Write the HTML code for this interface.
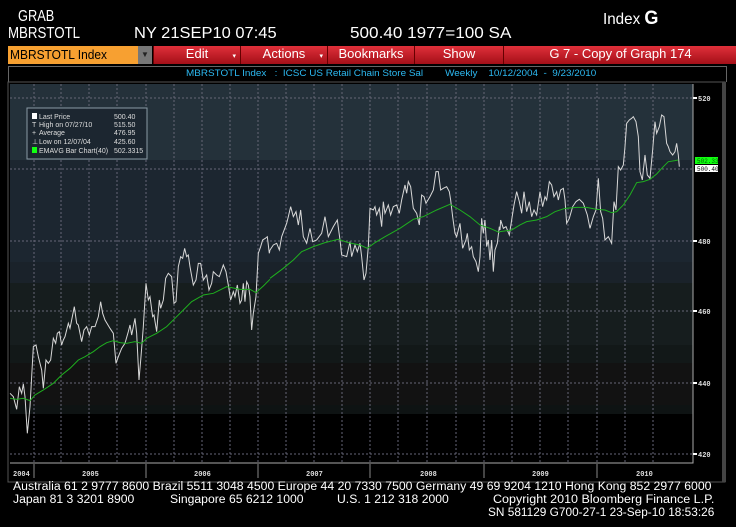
<!DOCTYPE html><html><head><meta charset="utf-8"><style>
body{margin:0;width:736px;height:527px;background:#000;overflow:hidden;position:relative;font-family:"Liberation Sans",sans-serif}
.t{position:absolute;color:#fff;white-space:nowrap;transform-origin:left}
.btn{position:absolute;top:46px;height:18px;background:linear-gradient(#e0303a,#a40f18);color:#fff;font-size:13px;text-align:center;line-height:16px;border-left:1px solid #600}
.f{position:absolute;color:#fff;font-size:11.5px;white-space:pre;transform-origin:left}
</style></head><body>
<div class="t" style="left:18px;top:8px;font-size:16px;transform:scaleX(.8)">GRAB</div>
<div class="t" style="left:603px;top:8px;font-size:16px;transform:scaleX(.95)">Index <b style="font-size:19px">G</b></div>
<div class="t" style="left:8px;top:25px;font-size:16px;transform:scaleX(.83)">MBRSTOTL</div>
<div class="t" style="left:134px;top:25px;font-size:16px;transform:scaleX(1.03)">NY 21SEP10 07:45</div>
<div class="t" style="left:350px;top:25px;font-size:16px;transform:scaleX(1.07)">500.40 1977=100 SA</div>
<div style="position:absolute;left:8px;top:46px;width:130px;height:18px;background:#f7a031;color:#000;font-size:13px;line-height:18px;padding-left:2px;box-sizing:border-box"><span style="display:inline-block;transform:scaleX(.92);transform-origin:left">MBRSTOTL Index</span></div>
<div style="position:absolute;left:138px;top:46px;width:14px;height:18px;background:#777;color:#222;font-size:8px;text-align:center;line-height:18px">▼</div>
<div class="btn" style="left:153px;width:86px">Edit <span style="font-size:7px;position:absolute;right:4px;top:3px">▾</span></div>
<div class="btn" style="left:240px;width:86px">Actions <span style="font-size:7px;position:absolute;right:4px;top:3px">▾</span></div>
<div class="btn" style="left:327px;width:86px">Bookmarks</div>
<div class="btn" style="left:414px;width:88px">Show</div>
<div class="btn" style="left:503px;width:233px">G 7 - Copy of Graph 174</div>
<div style="position:absolute;left:8px;top:66px;width:717px;height:15px;border:1px solid #666;border-bottom:none"></div>
<div class="t" style="left:186px;top:68px;font-size:9px;color:#2cb8f0;transform:scaleX(1.1)">MBRSTOTL Index &nbsp;&nbsp;: &nbsp;ICSC US Retail Chain Store Sal &nbsp;&nbsp;&nbsp;&nbsp;&nbsp;&nbsp;&nbsp;Weekly &nbsp;&nbsp;&nbsp;10/12/2004 &nbsp;- &nbsp;9/23/2010</div>
<svg style="position:absolute;left:0;top:0" width="736" height="527">
<rect x="8" y="82" width="717" height="400" fill="#000" stroke="#555"/>
<rect x="722" y="82" width="4" height="400" fill="#444"/>
<rect x="10" y="84" width="683" height="76" fill="#24313a"/>
<rect x="10" y="160" width="683" height="102" fill="#1c2630"/>
<rect x="10" y="262" width="683" height="21" fill="#1a222a"/>
<rect x="10" y="283" width="683" height="62" fill="#161d1e"/>
<rect x="10" y="345" width="683" height="18" fill="#121818"/>
<rect x="10" y="363" width="683" height="42" fill="#121212"/>
<rect x="10" y="405" width="683" height="9" fill="#0e1313"/>
<g stroke="#667" stroke-width="1" stroke-dasharray="2,2">
<path d="M10 98H693M10 169H693M10 241H693M10 311H693M10 383H693M10 454H693"/>
<path d="M34 84V463M61 84V463M89 84V463M117 84V463M146 84V463M174 84V463M202 84V463M230 84V463M258 84V463M286 84V463M314 84V463M342 84V463M370 84V463M398 84V463M427 84V463M456 84V463M484 84V463M512 84V463M540 84V463M568 84V463M597 84V463M625 84V463M653 84V463"/>
</g>
<path d="M10 463H693V84" stroke="#aaa" fill="none"/>
<g stroke="#888"><path d="M34 464V478M146 464V478M258 464V478M370 464V478M484 464V478M597 464V478"/></g>
<g fill="#ddd" font-size="7" font-family="Liberation Mono,monospace" font-weight="bold">
<text x="13" y="476">2004</text><text x="82" y="476">2005</text><text x="194" y="476">2006</text><text x="306" y="476">2007</text><text x="420" y="476">2008</text><text x="532" y="476">2009</text><text x="636" y="476">2010</text>
<text x="698" y="101">520</text><text x="698" y="244">480</text><text x="698" y="314">460</text><text x="698" y="386">440</text><text x="698" y="457">420</text>
</g>
<g fill="#fff"><rect x="693" y="97" width="4" height="2"/><rect x="693" y="240" width="4" height="2"/><rect x="693" y="310" width="4" height="2"/><rect x="693" y="382" width="4" height="2"/><rect x="693" y="453" width="4" height="2"/></g>
<rect x="695" y="157" width="23" height="7" fill="#1f1"/><rect x="695" y="165" width="23" height="7" fill="#fff"/>
<text x="697" y="163" font-size="6" fill="#060" font-family="Liberation Mono">502.33</text>
<text x="697" y="171" font-size="6" fill="#000" font-family="Liberation Mono">500.40</text>
<g fill="none" stroke-width="1">
<g transform="translate(10,200) scale(.3333)">
<polyline vector-effect="non-scaling-stroke" stroke="#d8d8d8" points="0,580 10,590 20,628 28,560 35,580 40,552 45,590 52,700 60,620 65,530 70,440 78,435 85,470 95,510 100,565 108,480 115,490 122,480 130,415 137,430 142,400 148,395 155,435 160,420 165,410 175,370 180,385 185,360 193,320 200,370 205,375 215,425 222,390 230,380 238,405 245,380 255,380 265,350 272,305 278,340 285,360 300,385 310,400 318,490 325,470 335,445 345,430 355,395 360,375 365,405 375,355 380,400 387,540 393,470 400,380 408,250 415,300 420,290 428,350 432,345 440,395 448,300 452,325 460,300 467,235 475,220 485,230 492,310 498,305 505,200 512,170 518,175 524,145 530,170 535,165 540,200 550,255 558,240 565,190 572,190 580,240 590,225 597,270 605,250 610,215 620,225 628,230 640,195 648,215 655,255 662,300 670,275 675,290 682,255 690,310 695,300 700,250 705,305 710,245 715,255 720,290 725,390 730,340 738,290 745,160 752,140 758,120 766,115 772,110 778,160 780,150"/>
<polyline vector-effect="non-scaling-stroke" stroke="#1fb01f" points="0,595 20,598 40,595 60,602 75,585 100,570 130,550 155,525 180,505 205,480 225,470 250,455 270,440 290,428 310,422 330,428 350,430 375,425 395,430 410,415 440,400 470,380 495,355 520,330 545,305 580,285 610,280 650,260 690,268 720,268 738,278 760,258 780,238"/>
</g>
<g transform="translate(260,100) scale(.3333)">
<polyline vector-effect="non-scaling-stroke" stroke="#d8d8d8" points="30,450 40,435 50,430 58,450 65,410 80,370 85,350 92,320 100,350 108,335 115,375 122,330 130,410 140,430 150,385 158,425 170,420 185,400 195,350 205,410 220,380 232,360 240,420 245,465 260,470 270,425 275,470 285,435 292,455 300,430 305,470 312,540 318,520 325,440 330,325 340,330 345,320 350,345 358,325 365,380 370,305 375,340 385,315 392,345 400,320 410,315 418,340 425,300 435,255 440,280 445,245 452,260 460,325 470,340 478,375 485,285 492,290 498,310 510,290 520,270 528,215 535,215 542,270 550,265 560,260 568,275 572,300 578,350 585,400 590,410 600,370 608,445 618,420 622,400 628,450 635,440 640,470 648,485 655,515 660,470 665,355 670,400 675,360 680,440 685,420 690,480 695,420 700,515 705,450 712,430 718,380 720,390"/>
<polyline vector-effect="non-scaling-stroke" stroke="#1fb01f" points="30,535 70,505 100,480 125,455 160,440 195,428 235,418 265,428 300,435 322,445 345,428 375,410 420,385 460,358 490,350 530,330 570,313 600,330 630,350 660,375 690,385 720,398"/>
</g>
<g transform="translate(490,100) scale(.3333)">
<polyline vector-effect="non-scaling-stroke" stroke="#d8d8d8" points="30,390 32,360 40,385 48,380 58,405 65,360 72,315 80,275 88,305 95,340 102,275 110,335 118,305 125,350 132,330 140,345 150,275 158,320 165,290 170,300 178,245 185,255 192,290 200,275 205,300 212,270 220,265 225,300 230,370 238,355 248,320 258,305 268,298 280,310 292,345 300,385 310,350 318,330 325,235 332,335 338,355 345,420 355,410 365,430 372,305 378,330 385,200 392,210 400,195 405,140 410,70 418,60 425,55 430,50 438,65 445,110 450,215 457,240 465,165 472,225 480,235 488,150 495,65 500,100 508,80 515,45 522,50 530,130 535,140 540,155 548,165 555,155 560,130 565,165 568,200"/>
<polyline vector-effect="non-scaling-stroke" stroke="#1fb01f" points="30,395 65,390 90,375 110,365 140,360 170,350 195,335 225,325 260,322 290,322 320,328 345,330 365,338 380,335 400,315 420,285 440,248 460,245 480,238 500,222 520,200 535,185 555,182 565,180"/>
</g>
</g>
<rect x="27" y="108" width="120" height="51" fill="#1c2630" stroke="#8a9aa5"/>
<g fill="#ddd" font-size="7" font-family="Liberation Sans,sans-serif">
<rect x="32" y="113" width="5" height="6" fill="#fff"/><text x="39" y="119">Last Price</text><text x="114" y="119">500.40</text>
<text x="32" y="127">T</text><text x="39" y="127">High on 07/27/10</text><text x="114" y="127">515.50</text>
<text x="32" y="135">+</text><text x="39" y="135">Average</text><text x="114" y="135">476.95</text>
<text x="32" y="144">⊥</text><text x="39" y="144">Low on 12/07/04</text><text x="114" y="144">425.60</text>
<rect x="32" y="147" width="5" height="6" fill="#1f1"/><text x="39" y="153">EMAVG Bar Chart(40)</text><text x="114" y="153">502.3315</text>
</g>
</svg>
<div class="f" style="left:13px;top:481px;transform:scaleX(1.065)">Australia 61 2 9777 8600 Brazil 5511 3048 4500 Europe 44 20 7330 7500 Germany 49 69 9204 1210 Hong Kong 852 2977 6000</div>
<div class="f" style="left:13px;top:494px;transform:scaleX(1.06)">Japan 81 3 3201 8900</div>
<div class="f" style="left:170px;top:494px;transform:scaleX(1.06)">Singapore 65 6212 1000</div>
<div class="f" style="left:337px;top:494px;transform:scaleX(1.06)">U.S. 1 212 318 2000</div>
<div class="f" style="left:493px;top:494px;transform:scaleX(1.09)">Copyright 2010 Bloomberg Finance L.P.</div>
<div class="f" style="left:488px;top:507px;transform:scaleX(1.03)">SN 581129 G700-27-1 23-Sep-10 18:53:26</div>
</body></html>
